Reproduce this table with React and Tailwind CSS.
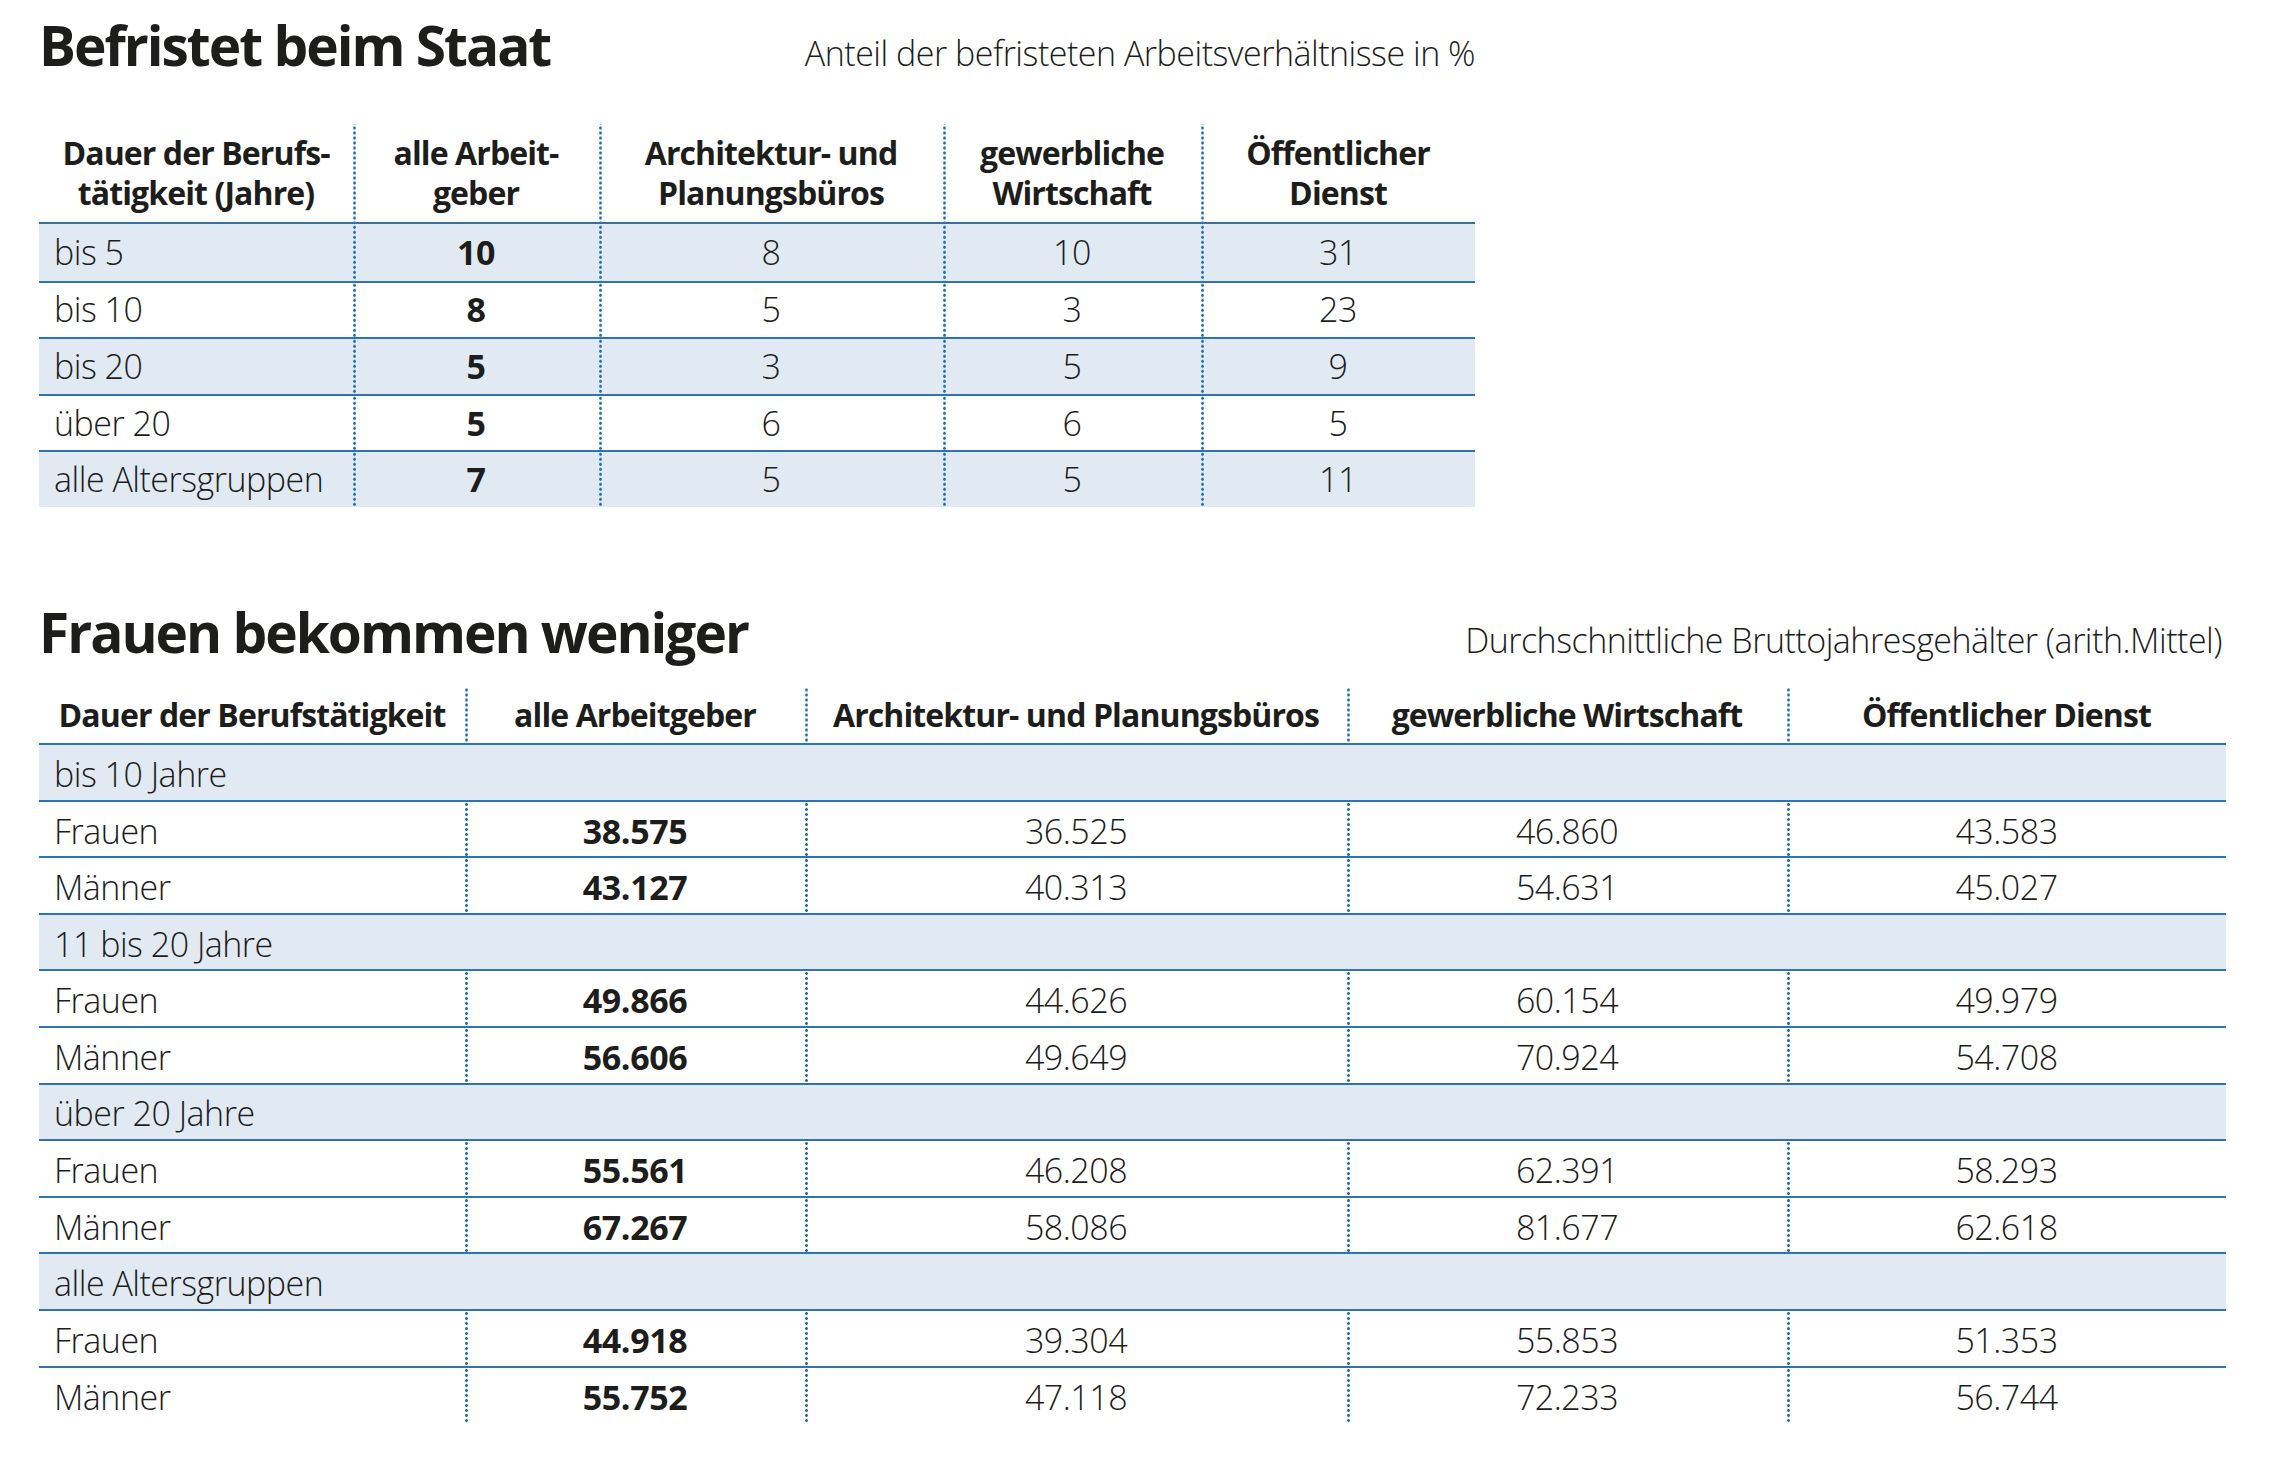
const dots =
  "bg-[radial-gradient(circle,#1f6db3_1.2px,transparent_1.6px)] bg-[length:3px_5px] bg-repeat-y bg-left";

const t1Cols = "grid grid-cols-[314px_246px_344px_258px_274px]";
const t2Cols = "grid grid-cols-[426px_340px_542px_440px_439px]";

const light = "font-light tracking-[-0.5px]";
const bold = "font-bold";

const t1Head = [
  ["Dauer der Berufs-", "tätigkeit (Jahre)"],
  ["alle Arbeit-", "geber"],
  ["Architektur- und", "Planungsbüros"],
  ["gewerbliche", "Wirtschaft"],
  ["Öffentlicher", "Dienst"],
];

const t1Rows = [
  ["bis 5", "10", "8", "10", "31"],
  ["bis 10", "8", "5", "3", "23"],
  ["bis 20", "5", "3", "5", "9"],
  ["über 20", "5", "6", "6", "5"],
  ["alle Altersgruppen", "7", "5", "5", "11"],
];

const t2Head = [
  "Dauer der Berufstätigkeit",
  "alle Arbeitgeber",
  "Architektur- und Planungsbüros",
  "gewerbliche Wirtschaft",
  "Öffentlicher Dienst",
];

const t2Groups = [
  {
    label: "bis 10 Jahre",
    rows: [
      ["Frauen", "38.575", "36.525", "46.860", "43.583"],
      ["Männer", "43.127", "40.313", "54.631", "45.027"],
    ],
  },
  {
    label: "11 bis 20 Jahre",
    rows: [
      ["Frauen", "49.866", "44.626", "60.154", "49.979"],
      ["Männer", "56.606", "49.649", "70.924", "54.708"],
    ],
  },
  {
    label: "über 20 Jahre",
    rows: [
      ["Frauen", "55.561", "46.208", "62.391", "58.293"],
      ["Männer", "67.267", "58.086", "81.677", "62.618"],
    ],
  },
  {
    label: "alle Altersgruppen",
    rows: [
      ["Frauen", "44.918", "39.304", "55.853", "51.353"],
      ["Männer", "55.752", "47.118", "72.233", "56.744"],
    ],
  },
];

function Cell({ i, pad, children }) {
  if (i === 0) {
    return <div className={"flex items-center pl-[15px] " + pad + " " + light}>{children}</div>;
  }
  return (
    <div
      className={
        dots +
        " flex items-center justify-center " +
        pad +
        " " +
        (i === 1 ? bold + " tracking-[-0.4px]" : light)
      }
    >
      {children}
    </div>
  );
}

function Title({ title, sub, subPad }) {
  return (
    <div className="flex items-baseline justify-between">
      <h1 className={"text-[55px] leading-none tracking-[-2px] " + bold}>{title}</h1>
      <span className={"text-[34px] leading-none " + subPad + " " + light}>{sub}</span>
    </div>
  );
}

const headCell = "text-center text-[32px] tracking-[-0.9px] " + bold;

export default function App() {
  return (
    <div className="min-h-screen bg-white pl-[39px] pt-[17px] font-['Open_Sans',sans-serif] text-[#1d1d1b]">
      <div className="w-[1436px]">
        <Title title="Befristet beim Staat" sub="Anteil der befristeten Arbeitsverhältnisse in %" subPad="" />
        <div className="mt-[52px] text-[34px]">
          <div className={t1Cols + " border-b-2 border-[#2f74b0]"}>
            {t1Head.map((h, i) => (
              <div key={i} className={(i > 0 ? dots + " " : "") + "py-[9px] leading-[40px] " + headCell}>
                {h[0]}
                <br />
                {h[1]}
              </div>
            ))}
          </div>
          {t1Rows.map((r, ri) => (
            <div
              key={ri}
              className={
                t1Cols +
                " h-[56.6px] " +
                (ri > 0 ? "border-t-2 border-[#2f74b0] " : "") +
                (ri % 2 === 0 ? "bg-[#e1e9f3]" : "bg-white")
              }
            >
              {r.map((c, i) => (
                <Cell key={i} i={i} pad="">
                  {c}
                </Cell>
              ))}
            </div>
          ))}
        </div>
      </div>

      <div className="mt-[97px] w-[2187px]">
        <Title
          title="Frauen bekommen weniger"
          sub="Durchschnittliche Bruttojahresgehälter (arith.Mittel)"
          subPad="pr-[4px]"
        />
        <div className="mt-[28px] text-[34px]">
          <div className={t2Cols}>
            {t2Head.map((h, i) => (
              <div key={i} className={(i > 0 ? dots + " " : "") + "py-[9px] leading-[38px] " + headCell}>
                {h}
              </div>
            ))}
          </div>
          {t2Groups.map((g) => (
            <div key={g.label}>
              <div
                className={
                  "flex h-[56.6px] items-center border-t-2 border-[#2f74b0] bg-[#e1e9f3] pl-[15px] pt-[4px] " + light
                }
              >
                {g.label}
              </div>
              {g.rows.map((r, ri) => (
                <div key={ri} className={t2Cols + " h-[56.6px] border-t-2 border-[#2f74b0]"}>
                  {r.map((c, i) => (
                    <Cell key={i} i={i} pad="pt-[4px]">
                      {c}
                    </Cell>
                  ))}
                </div>
              ))}
            </div>
          ))}
        </div>
      </div>
    </div>
  );
}
